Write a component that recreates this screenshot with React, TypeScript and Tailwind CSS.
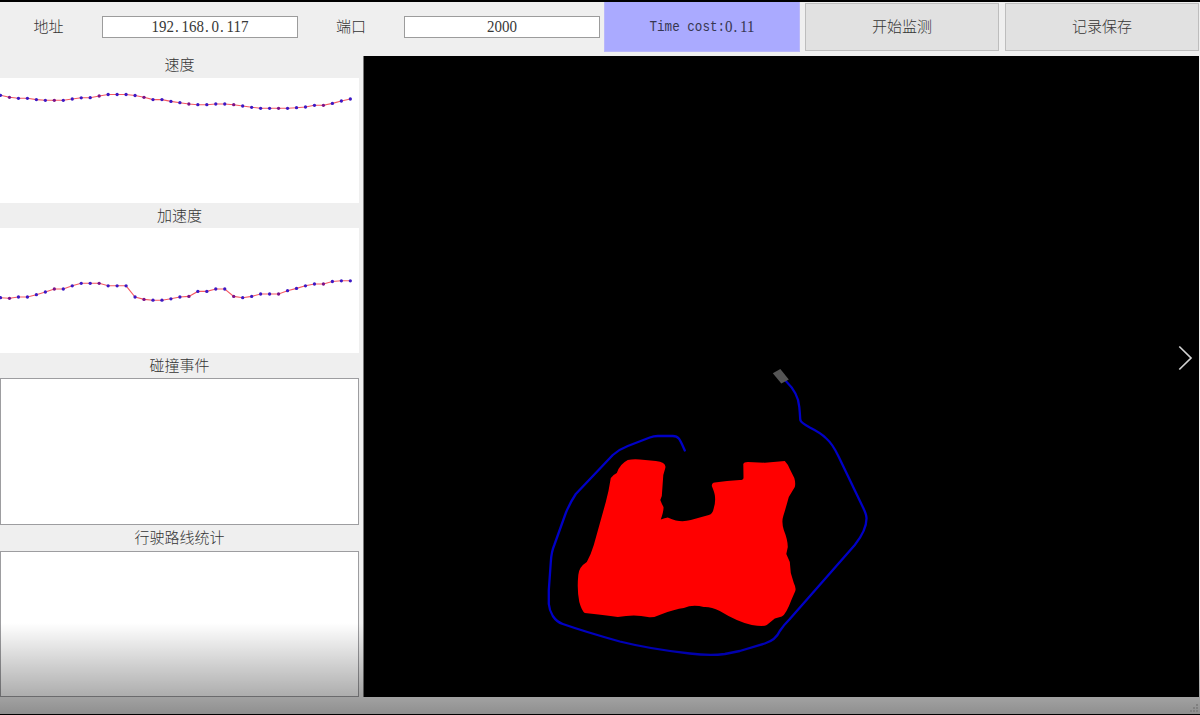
import React from "react";

const SPEED = [
  95.3, 97.3, 98.3, 98.3, 99.6, 100.3, 100.3, 100.3, 99, 97.8, 97.7, 96, 94.5, 94.5, 94.5, 95.5, 97.3, 99.6, 99.6, 101.4,
  102.7, 104, 104.7, 104.7, 104, 104, 104.7, 106, 107.3, 108.3, 108.3, 108.3, 108.3, 107.7, 107, 105.3, 105.3, 103.4, 101, 99,
];

const ACCELERATION = [
  297.7, 298.3, 297, 297, 294.7, 292, 289, 289, 285.8, 283.3, 283.3, 283.3, 285.8, 285.8, 285.8, 297, 299.4, 300.2, 300.2,
  298.8, 297, 296.4, 291.4, 291.4, 289, 289, 296.4, 297.7, 296.4, 294, 294, 294, 290.7, 288.4, 285.8, 284, 284, 281.5, 280.8,
  280.8,
];

const STEP = 8.97;

function Chart({ values, top }: { values: number[]; top: number }) {
  const points = values.map((v, i) => [0.5 + i * STEP, v - top]);
  return (
    <svg className="block h-[125px] w-[359px] shrink-0 bg-white" viewBox="0 0 359 125">
      <polyline points={points.map((p) => p.join(",")).join(" ")} fill="none" stroke="#f55a62" strokeWidth="1.1" />
      {points.map(([x, y], i) => (
        <circle key={i} cx={x} cy={y} r="1.65" fill={i % 5 === 1 ? "#7a1289" : "#3c18c4"} />
      ))}
    </svg>
  );
}

function Dot() {
  return <span className="inline-block w-[7.5px] pl-px text-left">.</span>;
}

function Label({ children, className }: { children: React.ReactNode; className: string }) {
  return <div className={`flex w-[359px] shrink-0 items-center justify-center ${className}`}>{children}</div>;
}

function RouteMap() {
  return (
    <svg className="block h-[641px] w-[835px] bg-black" viewBox="364.2 56 835 641">
      <path
        d="M685 450.5 C683 446 681 441 679 438.500 Q677 436 673 436 L658 436 Q654 436 650 437.500 L628 446 Q620 449 613 455 L576 494 Q570 503 566 513 L554.500 545 Q551.500 552 551 562 L549 590 L549 604 Q549.500 610 553 616 Q557 622 563 624 Q586 632 620 641.500 Q650 649 690 653.500 Q710 656 725 654 L740 651 L765 643.500 Q776 640 780 631 Q784 625 790 619 L855 545 Q867 530 866.700 518 Q866.500 514 863 507 L839 457 Q833 444 826 438 Q821 433 810 427.500 Q801 422.500 800.500 420 Q800 412 799.500 407 Q798.500 393 786 381"
        fill="none"
        stroke="#0000c6"
        strokeWidth="2.3"
        strokeLinecap="round"
        strokeLinejoin="round"
      />
      <path
        d="M628 460 Q633 459 640 459.500 L656 461 Q667 462.500 665.500 468 L663.500 475 L662 496 L660.500 500 Q662 504 663.700 507 Q664 511 661 519.500 Q665 518 668 517.500 Q671 519 676 520.500 Q684 522 691 520 L709 515 Q713 514 714 508 Q716 502 715 495 Q714.500 492 712 486 Q712 482.500 715 482.500 Q727 480.500 740 480 Q744 480 743.700 477 L743.500 464 Q744 462 748 462 L765 462.700 L785 461 Q788 464 790 469 L794.500 478 Q796 483 795 487 L789 497 Q786 508 783.500 516 Q781.500 522 784 530 Q788 540 788 547 L786.500 554 L790 562 L791 573 L794 583 Q796.500 588 795.500 591 L792 599 Q786 615 782 616.500 L775 618.500 L767 625 Q764 627 752 625 Q738 622 720 611 Q711 606.500 704 607 Q693 604 684 608 Q675 609 661 614.500 Q654 618 648 617 Q635 614 618 617 Q604 615 585 613 Q582 611 579.500 602 Q577 590 578.500 575 Q579 567 587 562 Q591 555 594 545 L606 502 Q609 491 611 478 Q613 475 617 473 Q620 464 628 460 Z"
        fill="#ff0000"
      />
      <path d="M773 373.300 L780.500 369 L789 379.500 L781.500 383.500 Z" fill="#555555" />
      <path d="M1179.500 346.500 L1191.200 358 L1179.500 369.500" fill="none" stroke="#d2d2d2" strokeWidth="1.7" />
    </svg>
  );
}

export default function App() {
  return (
    <div className="relative flex h-[715px] w-[1200px] flex-col overflow-hidden border-t-2 border-b border-black bg-[#efefef] font-['Liberation_Serif','Noto_Sans_CJK_SC',serif] text-[15px] leading-none font-light text-[#343434]">
      <header className="flex h-[54px] shrink-0 items-start">
        <div className="flex h-[51px] w-[97px] items-center justify-center">地址</div>
        <div className="mt-3.5 ml-[5px] flex h-[22px] w-[196px] items-center justify-center border border-[#9c9c9c] bg-white pt-px text-[#383838]">
          <div className="scale-y-110 whitespace-nowrap">
            192<Dot />168<Dot />0<Dot />117
          </div>
        </div>
        <div className="flex h-[51px] w-[106px] items-center justify-center">端口</div>
        <div className="mt-3.5 flex h-[22px] w-[196px] items-center justify-center border border-[#9c9c9c] bg-white pt-px text-[#383838]">
          <span className="scale-y-110">2000</span>
        </div>
        <div className="ml-1 flex h-[49.500px] w-[196px] items-center justify-center border border-t-0 border-[#b9b7fa] bg-[#aaaaff] pt-1 whitespace-pre text-[#363650]">
          <span className="scale-y-115 font-['Liberation_Mono',monospace] text-[12.600px] font-normal">Time cost:</span>
          <span className="mb-0.5 scale-y-110">
            0<Dot />11
          </span>
        </div>
        <button className="mt-px ml-[5px] h-12 w-[194px] border border-[#bdbdbd] bg-[#e1e1e1] pt-px">开始监测</button>
        <button className="mt-px ml-1.5 h-12 w-[194px] border border-[#bdbdbd] bg-[#e1e1e1] pt-px">记录保存</button>
      </header>

      <main className="flex h-[641px] shrink-0">
        <aside className="flex w-[359px] shrink-0 flex-col">
          <Label className="h-[21.500px] pb-[3px]">速度</Label>
          <Chart values={SPEED} top={78} />
          <Label className="h-[25.500px] pt-0.5">加速度</Label>
          <Chart values={ACCELERATION} top={228} />
          <Label className="h-[25px] pt-0.5">碰撞事件</Label>
          <div className="h-[147px] w-[359px] shrink-0 border border-[#9d9da0] bg-white" />
          <Label className="h-[25.500px] pt-0.5">行驶路线统计</Label>
          <div className="h-[146.500px] w-[359px] shrink-0 border border-[#9d9da0] bg-white" />
        </aside>
        <div className="ml-1 w-[836px] border-l border-[#777777]">
          <RouteMap />
        </div>
      </main>

      <div className="pointer-events-none absolute inset-x-0 bottom-0 h-[91px] bg-linear-to-b from-black/0 to-black/40" />
      <svg className="absolute right-0.5 bottom-0.5 h-2 w-2" viewBox="0 0 8 8" fill="#808080">
        <path d="M6 0h2v2h-2z M3 3h2v2h-2z M6 3h2v2h-2z M0 6h2v2h-2z M3 6h2v2h-2z M6 6h2v2h-2z" />
      </svg>
    </div>
  );
}
